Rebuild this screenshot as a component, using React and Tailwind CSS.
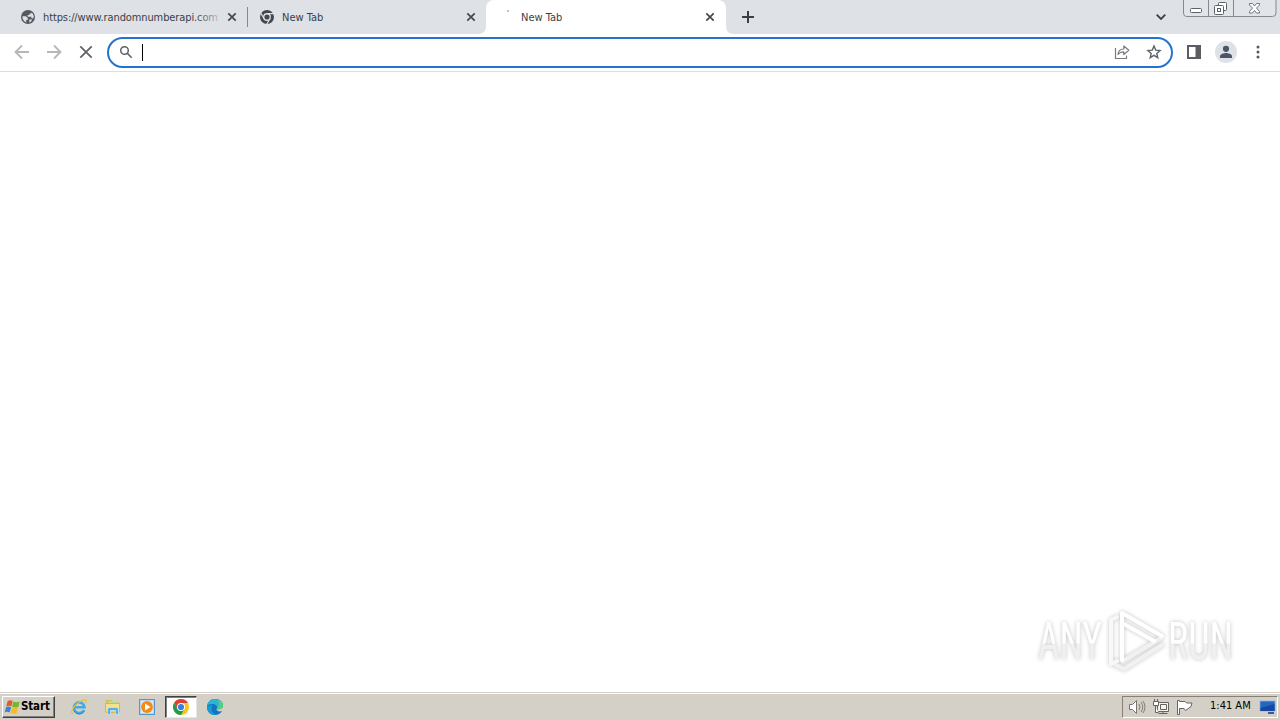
const uiFont = "font-['DejaVu_Sans_Condensed','DejaVu_Sans',sans-serif] [font-stretch:condensed]";

function CloseIcon({ className }) {
  return (
    <svg className={className} viewBox="0 0 10 10" fill="none" stroke="#45484d" strokeWidth="1.7">
      <path d="M1.300 1.300l7.400 7.400M8.700 1.300L1.300 8.700" />
    </svg>
  );
}

function GlobeIcon() {
  return (
    <svg className="w-4 h-4 shrink-0" viewBox="0 0 16 16">
      <circle cx="8" cy="8" r="7" fill="#555960" />
      <path d="M2.400 7.200h3.400l2 1.800v1.700l-1.600.2v2.500C3.800 12.600 2.200 10 2.400 7.200zM9 2.300c2.600.5 4.700 2.700 4.800 5.500l-.7 1.700-1.700-.2V7.700H7.600V6h1.900V4.500h1.900V3.200zM9.300 10.500h2.900l-1.400 2.200-1.500.7z" fill="#dee1e6" />
    </svg>
  );
}

function ChromeMono() {
  return (
    <svg className="w-4 h-4 shrink-0" viewBox="0 0 16 16" fill="none">
      <circle cx="8" cy="8" r="7" fill="#44474d" />
      <circle cx="8" cy="8" r="3.900" fill="#dee1e6" />
      <circle cx="8" cy="8" r="2.600" fill="#44474d" />
      <path d="M8 4.700h7M5.100 9.700L1.600 3.700M10.900 9.700l-3.500 6" stroke="#dee1e6" strokeWidth="1.200" />
    </svg>
  );
}

function Tab({ icon, title, className, fade }) {
  return (
    <div className={`flex items-center h-[34px] shrink-0 ${className}`}>
      {icon}
      <span className="relative ml-[7px] mt-px w-[176px] whitespace-nowrap leading-[14px]">
        {title}
        {fade && <span className="absolute right-0 top-0 w-6 h-full bg-gradient-to-r from-transparent to-[#dee1e6]/80" />}
      </span>
      <CloseIcon className="w-[10px] h-[10px] ml-2" />
    </div>
  );
}

function WindowControls() {
  return (
    <svg className="absolute right-0 top-0 w-[98px] h-[18px]" viewBox="0 0 98 18" fill="none">
      <path d="M1.500 0v13q0 3.500 3 3.500h86q3.500 0 3.500-3.500V0" fill="#e1e4e9" stroke="#85888e" />
      <path d="M26.500 0v16M51.500 0v16" stroke="#85888e" />
      <rect x="8.500" y="8.500" width="11" height="4" rx="1" fill="#fff" stroke="#5d6168" />
      <rect x="36.500" y="2.500" width="8" height="8" rx="1" fill="#fff" stroke="#5d6168" />
      <rect x="32.500" y="5.500" width="9" height="9" rx="1" fill="#fff" stroke="#5d6168" />
      <rect x="35.500" y="8.500" width="3" height="3" stroke="#5d6168" />
      <path d="M67.500 3.500h3l2 2.500 2-2.500h3v1.500L74.500 8l3 3.500v1.500h-3l-2-2.500-2 2.500h-3v-1.500l3-3.500-3-3z" fill="#fff" stroke="#63676e" strokeWidth=".9" />
    </svg>
  );
}

function TabStrip() {
  return (
    <div className="relative flex h-[34px] bg-[#dee1e6] text-[#3c4043]">
      <Tab
        className="w-[247px] pl-5"
        icon={<GlobeIcon />}
        title={<span className="tracking-[-0.11px]">https://www.randomnumberapi.com</span>}
        fade
      />
      <div className="w-px h-5 mt-[7px] bg-[#85888d]" />
      <Tab className="w-[238px] pl-[11px]" icon={<ChromeMono />} title="New Tab" />
      <div className="relative">
        <svg className="absolute -left-2 bottom-0 w-[256px] h-2" viewBox="0 0 256 8" fill="#fff">
          <path d="M0 8q8 0 8-8v8zM256 8q-8 0-8-8v8z" />
        </svg>
        <Tab
          className="w-[240px] pl-3 bg-white rounded-t-lg"
          icon={
            <svg className="w-4 h-4 shrink-0" viewBox="0 0 16 16">
              <rect x="9" y="1" width="2" height="2" fill="#bfc1c4" />
            </svg>
          }
          title="New Tab"
        />
      </div>
      <svg className="w-3 h-3 ml-4 mt-[11px]" viewBox="0 0 12 12" stroke="#3b3e43" strokeWidth="2">
        <path d="M6 0v12M0 6h12" />
      </svg>
      <svg className="w-[10px] h-[6px] ml-auto mr-[114px] mt-[14px]" viewBox="0 0 10 6" fill="none" stroke="#3c4043" strokeWidth="1.800">
        <path d="M.7.700L5 5 9.300.700" />
      </svg>
      <WindowControls />
    </div>
  );
}

function Toolbar() {
  return (
    <div className="flex items-center h-[38px] pl-[14px] pb-px bg-white border-b border-[#dddde0]">
      <div className="flex gap-4">
        <svg className="w-4 h-4" viewBox="0 0 16 16" fill="none" stroke="#b5b7ba" strokeWidth="1.800">
          <path d="M15 8H2M8 1.500L1.500 8 8 14.500" />
        </svg>
        <svg className="w-4 h-4" viewBox="0 0 16 16" fill="none" stroke="#b5b7ba" strokeWidth="1.800">
          <path d="M1 8h13M8 1.500L14.500 8 8 14.500" />
        </svg>
        <svg className="w-4 h-4" viewBox="0 0 16 16" fill="none" stroke="#5f6368" strokeWidth="1.800">
          <path d="M2.300 2.300l11.400 11.400M13.700 2.300L2.300 13.700" />
        </svg>
      </div>
      <div className="flex items-center w-[1066px] h-[31px] ml-[13px] pl-[10px] pr-[9px] rounded-full border-2 border-[#2673ce] bg-white">
        <svg className="w-[14px] h-[14px]" viewBox="0 0 14 14" fill="none" stroke="#5f6368" strokeWidth="1.500">
          <circle cx="5.500" cy="5.500" r="3.800" />
          <path d="M8.400 8.400l4.300 4.300" />
        </svg>
        <div className="w-px h-[17px] ml-[9px] bg-black" />
        <svg className="w-4 h-4 ml-auto" viewBox="0 0 16 16" fill="none" stroke="#777b80" strokeWidth="1.200">
          <path d="M1.500 4v10.500h11V11.500" />
          <path d="M4 10.500C4.300 6.500 6.500 5 9.800 5V2l5 4.300-5 4.200V7.800C7.300 7.800 5.500 8.500 4 10.500z" strokeLinejoin="round" />
        </svg>
        <svg className="w-4 h-4 ml-4" viewBox="0 0 16 16" fill="none" stroke="#5f6368" strokeWidth="1.400">
          <path d="M8 2.100l1.700 4 4.400.4-3.300 2.900 1 4.300L8 11.400l-3.800 2.300 1-4.300-3.300-2.900 4.400-.4z" />
        </svg>
      </div>
      <svg className="w-[14px] h-[14px] ml-[14px]" viewBox="0 0 14 14">
        <path d="M0 0h14v14H0z" fill="#5b5d61" />
        <path d="M2 2h6.500v10H2z" fill="#fff" />
      </svg>
      <svg className="w-[22px] h-[22px] ml-[14px]" viewBox="0 0 22 22">
        <circle cx="11" cy="11" r="11" fill="#dee1e6" />
        <circle cx="11" cy="7.800" r="3.100" fill="#4d5469" />
        <path d="M5 17v-1.700C5 13 9 12 11 12s6 1 6 3.300V17z" fill="#4d5469" />
      </svg>
      <svg className="w-1 h-[14px] ml-[19px]" viewBox="0 0 4 14" fill="#55585d">
        <circle cx="2" cy="2" r="1.500" />
        <circle cx="2" cy="7" r="1.500" />
        <circle cx="2" cy="12" r="1.500" />
      </svg>
    </div>
  );
}

function Watermark() {
  return (
    <svg
      className="absolute left-[1030px] top-[600px] w-[220px] h-[82px] drop-shadow-[0_0_2px_rgba(0,0,0,0.24)]"
      viewBox="0 -4 220 82"
      fill="none"
    >
      <defs>
        <linearGradient id="wm" gradientUnits="userSpaceOnUse" x1="0" y1="18" x2="0" y2="56">
          <stop offset=".56" stopColor="#fff" />
          <stop offset=".57" stopColor="#f0f0f0" />
        </linearGradient>
      </defs>
      <g className="font-['Roboto',sans-serif]" fontSize="51" fill="url(#wm)">
        <text x="8" y="55" textLength="64" lengthAdjust="spacingAndGlyphs">ANY</text>
        <text x="138" y="55" textLength="65" lengthAdjust="spacingAndGlyphs">RUN</text>
      </g>
      <g strokeWidth="4" strokeLinejoin="round" strokeLinecap="round">
        <path d="M132 41L94 65l-8-4M131 34L93 57" stroke="#f1f1f1" />
        <path d="M87 13l-6 3v44l6-3" stroke="#f8f8f8" />
        <path d="M92 56V9l40 23M94 20l30 17" stroke="#fff" />
      </g>
    </svg>
  );
}

function WindowsFlag() {
  return (
    <svg className="w-[17px] h-4 shrink-0" viewBox="0 0 16 16">
      <path d="M3.200 2Q5.700.5 8.200 2L6.900 7.300Q4.200 6 1.700 7.300z" fill="#e8592a" />
      <path d="M8.900 2.500Q11.500 4 15.200 2.500L13.800 7.900Q10.500 9 7.500 7.700z" fill="#75b52c" />
      <path d="M1.500 8.200Q4 7 6.600 8.200L5.200 13.500Q2.700 12.200.2 13.500z" fill="#3c84cf" />
      <path d="M7.300 8.600Q10 10 13.500 8.600L12.100 14.200Q9 15.300 6 14z" fill="#f4bd25" />
    </svg>
  );
}

function IeIcon() {
  return (
    <svg className="w-[18px] h-[18px]" viewBox="0 0 18 18" fill="none">
      <path d="M14 12A5.300 5.300 0 1 1 14.500 9.200H5" stroke="#43a9df" strokeWidth="2.600" />
      <path d="M14.500 13A6 6 0 0 1 4 13" stroke="#1b78be" strokeWidth=".8" />
      <path d="M3 16C-1 14 5 6 11 3c4-2 6-1 5 2" stroke="#e5bd45" strokeWidth="1.200" />
    </svg>
  );
}

function FolderIcon() {
  return (
    <svg className="w-[18px] h-[18px]" viewBox="0 0 18 18">
      <path d="M2 2h6l1 2h6v11H2z" fill="#e3b94e" />
      <path d="M4 3h10v7H4z" fill="#b9dc9b" />
      <path d="M1.500 5.500h14V14h-14z" fill="#f7e08a" stroke="#d2ad4b" strokeWidth=".8" />
      <path d="M3.500 16.500v-5q0-2 2-2h7q2 0 2 2v5h-3v-4h-5v4z" fill="#55b0e6" stroke="#d7f1fb" strokeWidth=".6" />
    </svg>
  );
}

function PlayerIcon() {
  return (
    <svg className="w-[18px] h-[18px]" viewBox="0 0 18 18">
      <rect x="1.500" y="1.500" width="15" height="15" fill="#b9d8ef" stroke="#5594cc" />
      <path d="M3 3h12v12H3z" fill="#dbe9f3" />
      <circle cx="9" cy="9" r="5.900" fill="#f08a18" />
      <path d="M7 5.500v7L12.500 9z" fill="#fff" />
    </svg>
  );
}

function ChromeIcon() {
  return (
    <svg className="w-[18px] h-[18px]" viewBox="0 0 18 18">
      <circle cx="9" cy="9" r="8" fill="#f9c51d" />
      <path d="M2.070 5A8 8 0 0 1 15.930 5H9v8L5.540 11z" fill="#df4130" />
      <path d="M2.070 5A8 8 0 0 0 9 17L12.460 11H5.540z" fill="#219b50" />
      <circle cx="9" cy="9" r="4" fill="#fff" />
      <circle cx="9" cy="9" r="3.100" fill="#397fe6" />
    </svg>
  );
}

function EdgeIcon() {
  return (
    <svg className="w-[18px] h-[18px]" viewBox="0 0 18 18">
      <path d="M1 9C1 4.500 4.500 1 9 1c5 0 8 3.300 8 6.500 0 3-3 4.500-6.500 3.500 0 2 2.500 3 5.500 2-1.500 2.700-4 4-7 4-4.500 0-8-3.500-8-8z" fill="#1472c5" />
      <path d="M1 8.500C1.500 3.500 5 1 9 1c5 0 8 3.500 8 6.500 0 3-3 4.500-6.500 3.500.8-1 .8-2.500-.3-3.500C8 5.500 3 5.500 1 8.500z" fill="#2bb5cf" />
      <path d="M12 1.600c3.500 1 5 3.500 5 5.900 0 3-3 4.500-6.500 3.500 3-2 3-6 1.500-9.400z" fill="#58cf78" />
      <path d="M6.500 7.500C4.500 11 6 15 10 16.900 4 17.500 1 13 1 9.500c1-2 3.500-2.800 5.500-2z" fill="#159bd3" />
    </svg>
  );
}

function Tray() {
  return (
    <div className="flex items-center w-[156px] h-[22px] mr-[2px] ml-auto pl-[5px] border border-t-[#858078] border-l-[#858078] border-b-white border-r-white">
      <svg className="w-[18px] h-[16px] shrink-0" viewBox="0 0 18 16" fill="none" stroke="#77756f">
        <path d="M1.500 5.500h3l4-4v13l-4-4h-3z" fill="#fff" />
        <path d="M11 5q2 3 0 6M13 3q3.500 5 0 10M15 2q4 6 0 12" strokeWidth=".9" />
      </svg>
      <svg className="w-[18px] h-[16px] ml-[6px] shrink-0" viewBox="0 0 18 16" fill="none" stroke="#66645f">
        <path d="M5.500 3.500h11v9h-11z" fill="#f4f3f0" />
        <path d="M8.500 5.500h6v5h-6zM11 12v2M6.500 14.500h9" />
        <path d="M1.500 2.500h5v4h-5zM2.500 0v3M5.500 0v3M3.500 7v6.500h3" fill="#fff" />
      </svg>
      <svg className="w-[18px] h-[16px] ml-[5px] shrink-0" viewBox="0 0 18 16" fill="#fff" stroke="#66645f">
        <path d="M2.500 1.500v14h2V9.500h4.500l1.500 2 5.500-4 1-3.500h-5.500L10 2.500H4.500v-1z" />
      </svg>
      <span className="ml-[17px] w-[41px] shrink-0 whitespace-nowrap text-black">1:41 AM</span>
      <svg className="w-[17px] h-[16px] ml-[8px] shrink-0" viewBox="0 0 17 16">
        <path d="M1 2h15v10H1z" fill="#2467c2" stroke="#85b3df" strokeWidth=".8" />
        <path d="M1.500 9L15.500 5v7h-14z" fill="#1747a0" />
        <path d="M9 13h6v2H9z" fill="#3459a5" />
      </svg>
    </div>
  );
}

function Taskbar() {
  return (
    <div className="flex items-center h-[28px] pb-px pt-px bg-[#d4d0c8] border-t border-[#d4d0c8] shadow-[inset_0_1px_0_#fff]">
      <button className="flex items-center w-[53px] h-[22px] ml-[2px] pl-px bg-[#d4d0c8] border border-t-white border-l-white border-b-[#404040] border-r-[#404040] shadow-[inset_-1px_-1px_0_#808080] font-bold text-[11.5px] text-black tracking-[-0.15px]">
        <WindowsFlag />
        <span>Start</span>
      </button>
      <div className="flex items-center ml-[15px]">
        <IeIcon />
        <div className="ml-4"><FolderIcon /></div>
        <div className="ml-4"><PlayerIcon /></div>
        <div className="flex items-center justify-center w-[32px] h-[22px] ml-[9px] bg-white border border-t-[#404040] border-l-[#404040] border-b-[#e8e6e1] border-r-[#e8e6e1] shadow-[inset_1px_1px_0_#808080]">
          <ChromeIcon />
        </div>
        <div className="ml-[9px]"><EdgeIcon /></div>
      </div>
      <Tray />
    </div>
  );
}

export default function App() {
  return (
    <div className={`relative flex flex-col w-[1280px] h-[720px] overflow-hidden bg-white text-[11px] ${uiFont}`}>
      <TabStrip />
      <Toolbar />
      <main className="flex-1">
        <Watermark />
      </main>
      <Taskbar />
    </div>
  );
}
